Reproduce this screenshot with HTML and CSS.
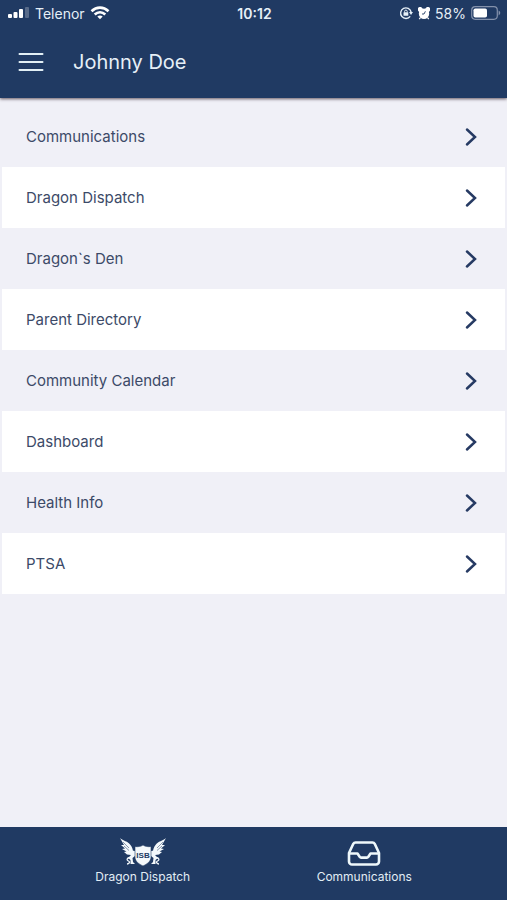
FILE: index.html
```html
<!DOCTYPE html>
<html lang="en">
<head>
  <meta charset="UTF-8">
  <meta name="viewport" content="width=device-width, initial-scale=1">
  <title>Johnny Doe</title>
  <link rel="stylesheet" href="styles.css">
</head>
<body>

  <header class="header">
    <div class="status">
      <div class="status-left">
        <svg class="signal" viewBox="0 0 22 12" width="22" height="12">
          <rect x="0" y="7" width="4" height="4" rx="1"/>
          <rect x="5.500" y="5" width="4" height="6" rx="1"/>
          <rect x="11" y="2" width="4" height="9" rx="1"/>
          <rect x="17" y="0" width="4" height="11" rx="1" opacity=".25"/>
        </svg>
        <span>Telenor</span>
        <svg class="wifi" viewBox="0 0 20 14" width="20" height="14" fill="none" stroke="#fff" stroke-width="2.600">
          <path d="M1.500 5.200C6.500 .4 13.500 .4 18.500 5.200"/>
          <path d="M4.700 8.500c3.200-3 7.400-3 10.600 0"/>
          <path d="M7.300 10.500c1.600-1.300 3.800-1.300 5.400 0L10 13.300z" fill="#fff" stroke="none"/>
        </svg>
      </div>
      <span class="time">10:12</span>
      <div class="status-right">
        <svg class="lock" viewBox="0 0 14 14" width="14" height="14" fill="none" stroke="#e6f0f8">
          <path d="M11.200 10.300A5.300 5.300 0 1 1 12.100 6" stroke-width="1.400"/>
          <path d="M10 6h4l-2 3z" fill="#e6f0f8" stroke="none"/>
          <path d="M5.600 6.500V5.400a1.300 1.300 0 0 1 2.600 0v1.100" stroke-width="1"/>
          <rect x="4.500" y="6.300" width="4.800" height="3.500" rx=".5" fill="#e6f0f8" stroke="none"/>
        </svg>
        <svg class="alarm" viewBox="0 0 12 13" width="12" height="13" fill="#fff">
          <circle cx="6" cy="6.700" r="5.200"/>
          <path d="M.3 4A2.200 2.200 0 0 1 3.900.800L6 3 8.100.800A2.200 2.200 0 0 1 11.700 4L10 6H2z"/>
          <path d="M2.500 10.500L1.300 12.200M9.500 10.500L10.700 12.200" stroke="#fff" stroke-width="1.300"/>
          <path d="M7.400 4.300L6 7H4" fill="none" stroke="#203a63" stroke-width=".9"/>
        </svg>
        <span>58%</span>
        <svg class="battery" viewBox="0 0 30 14" width="30" height="14">
          <rect x=".7" y=".7" width="25.600" height="12.600" rx="3.500" fill="none" stroke="#8391ab" stroke-width="1.200"/>
          <rect x="2.500" y="2.500" width="13.500" height="9" rx="1.800" fill="#fff"/>
          <path d="M27.600 4.600c2.200.9 2.200 3.900 0 4.800z" fill="#8391ab"/>
        </svg>
      </div>
    </div>
    <div class="bar">
      <button class="menu-btn" type="button" aria-label="Menu">
        <svg viewBox="0 0 26 20" width="26" height="20" stroke="#e2eff5" stroke-width="2" stroke-linecap="round">
          <path d="M1.500 2h23M1.500 10h23M1.500 18h23"/>
        </svg>
      </button>
      <h1>Johnny Doe</h1>
    </div>
  </header>

  <main class="content">
    <ul class="list">
      <li><a href="#">Communications <svg class="arrow" viewBox="0 0 14 20"><path d="M3 2.500L11 10L3 17.500"/></svg></a></li>
      <li><a href="#">Dragon Dispatch <svg class="arrow" viewBox="0 0 14 20"><path d="M3 2.500L11 10L3 17.500"/></svg></a></li>
      <li><a href="#">Dragon`s Den <svg class="arrow" viewBox="0 0 14 20"><path d="M3 2.500L11 10L3 17.500"/></svg></a></li>
      <li><a href="#">Parent Directory <svg class="arrow" viewBox="0 0 14 20"><path d="M3 2.500L11 10L3 17.500"/></svg></a></li>
      <li><a href="#">Community Calendar <svg class="arrow" viewBox="0 0 14 20"><path d="M3 2.500L11 10L3 17.500"/></svg></a></li>
      <li><a href="#">Dashboard <svg class="arrow" viewBox="0 0 14 20"><path d="M3 2.500L11 10L3 17.500"/></svg></a></li>
      <li><a href="#">Health Info <svg class="arrow" viewBox="0 0 14 20"><path d="M3 2.500L11 10L3 17.500"/></svg></a></li>
      <li><a href="#">PTSA <svg class="arrow" viewBox="0 0 14 20"><path d="M3 2.500L11 10L3 17.500"/></svg></a></li>
    </ul>
  </main>

  <nav class="tabs">
    <a href="#">
      <svg viewBox="0 0 48 30" width="48" height="30" fill="#f4f9fc">
        <!-- left dragon, mirrored for the right one -->
        <g id="dragon">
          <path d="M1 1C4 4 9 4 11.500 8C13 10 14 12 14 15L12 18L8 17.500L5 15L7.500 14.500L3 12L6 11.500L2 8L5 8Z"/>
          <path d="M11 16L13 13.500L16 14L16 19L13.500 21L14 25L16 27H11.500L11.500 23L9 21L12 18Z"/>
          <path d="M12 21C8 20 7 23 9.500 24C11.500 25 10 27 8 27" fill="none" stroke="#f4f9fc" stroke-width="1.300"/>
          <path d="M4 5L10 11M5 9L10 13.500" stroke="#203a63" stroke-width=".5"/>
        </g>
        <use href="#dragon" transform="matrix(-1 0 0 1 48 0)"/>
        <path d="M16 9.500C19 10 22 9.500 24 8C26 9.500 29 10 32 9.500V20C32 24.500 28 27 24 29C20 27 16 24.500 16 20Z" stroke="#203a63" stroke-width=".6"/>
        <text class="crest" x="24" y="21" text-anchor="middle">ISB</text>
      </svg>
      <span>Dragon Dispatch</span>
    </a>
    <a href="#">
      <svg viewBox="0 0 34 30" width="34" height="30" fill="none" stroke="#eef8fb" stroke-width="2.600" stroke-linejoin="round">
        <path d="M8.500 5.500h17a2.500 2.500 0 0 1 2.200 1.300L32 16v8.500a3 3 0 0 1-3 3H5a3 3 0 0 1-3-3V16L6.300 6.800A2.500 2.500 0 0 1 8.500 5.500z"/>
        <path d="M2 16.500h8.500l2.300 3.400a1.500 1.500 0 0 0 1.300.7h5.800a1.500 1.500 0 0 0 1.300-.7l2.300-3.400H32"/>
      </svg>
      <span>Communications</span>
    </a>
  </nav>

</body>
</html>
```
FILE: styles.css
```css
* {
  box-sizing: border-box;
}

body {
  margin: 0;
  min-height: 100vh;
  display: flex;
  flex-direction: column;
  font-family: Inter, "Liberation Sans", sans-serif;
  background-color: #f0f0f7;
}

a {
  color: inherit;
  text-decoration: none;
}

svg {
  display: block;
  flex: none;
}

.header {
  background-color: #203a63;
  color: #e6eff7;
  box-shadow: 0 1px 3px rgba(40, 20, 30, 0.7);
}

.status {
  display: grid;
  grid-template-columns: 1fr auto 1fr;
  align-items: center;
  height: 26px;
  padding: 0 6px 0 8px;
  font-size: 14px;
}

.status-left,
.status-right {
  display: flex;
  align-items: center;
  gap: 5px;
}

.status-right {
  justify-content: flex-end;
}

.signal {
  fill: #fff;
}

.time {
  font-weight: 600;
}

.bar {
  display: flex;
  align-items: center;
  gap: 29px;
  height: 72px;
  padding: 0 18px;
}

.menu-btn {
  padding: 0;
  border: none;
  background: none;
  cursor: pointer;
}

h1 {
  margin: 0;
  font-size: 20px;
  font-weight: 400;
}

.content {
  flex: 1;
  padding: 8px 2px;
}

.list {
  margin: 0;
  padding: 0;
  list-style: none;
}

.list li:nth-child(even) {
  background-color: #fff;
}

.list a {
  display: flex;
  align-items: center;
  justify-content: space-between;
  height: 61px;
  padding: 0 27px 0 24px;
  font-size: 15px;
  color: #3c4a68;
}

.arrow {
  width: 14px;
  height: 20px;
  fill: none;
  stroke: #263a63;
  stroke-width: 2.5;
  stroke-linecap: round;
}

.tabs {
  display: flex;
  height: 73px;
  padding: 10px 32px 0;
  background-color: #203a63;
  color: #e2edf5;
}

.tabs a {
  flex: 1;
  display: flex;
  flex-direction: column;
  align-items: center;
  font-size: 12px;
  line-height: 20px;
}

.crest {
  font-family: "Liberation Sans", sans-serif;
  font-size: 8px;
  font-weight: bold;
  fill: #203a63;
}
```
